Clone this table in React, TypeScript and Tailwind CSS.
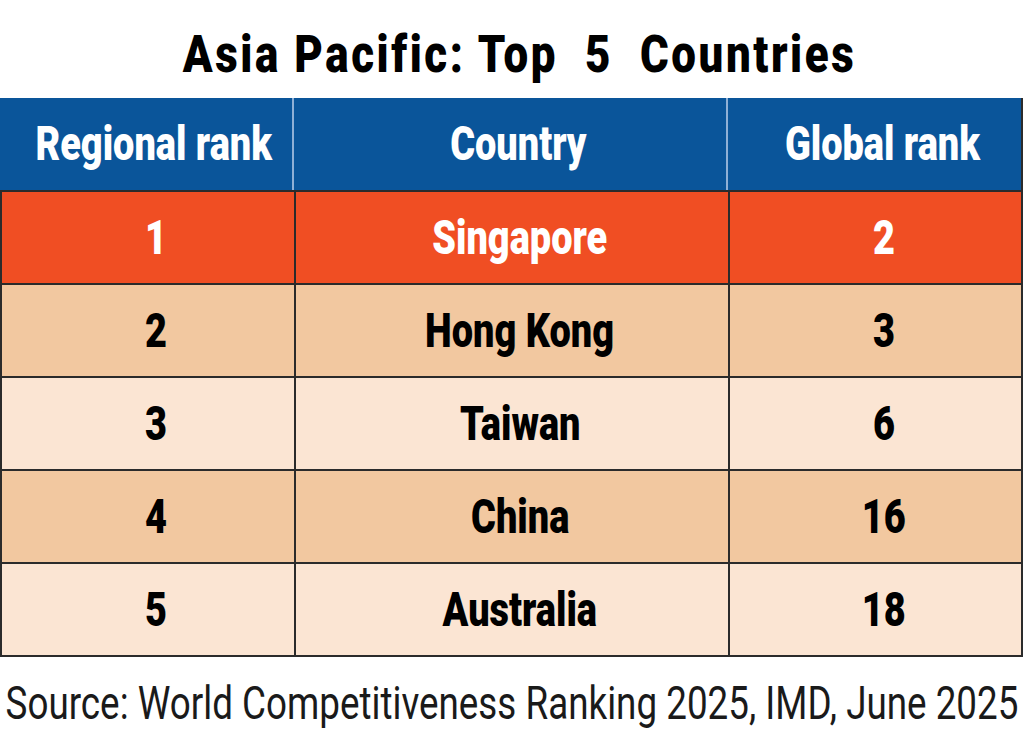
const rows = [
  { rank: "1", country: "Singapore", global: "2", tone: "top" },
  { rank: "2", country: "Hong Kong", global: "3", tone: "dark" },
  { rank: "3", country: "Taiwan", global: "6", tone: "light" },
  { rank: "4", country: "China", global: "16", tone: "dark" },
  { rank: "5", country: "Australia", global: "18", tone: "light" },
]

const toneClass: Record<string, string> = {
  top: "bg-[#f04e23] text-white",
  dark: "bg-[#f2c8a0] text-black",
  light: "bg-[#fbe5d3] text-black",
}

function Cond({ children, className = "" }: { children: React.ReactNode; className?: string }) {
  return <span className={`inline-block origin-center whitespace-nowrap ${className}`}>{children}</span>
}

function Cell({ children, divider }: { children: React.ReactNode; divider?: string }) {
  return (
    <div className={`flex items-center justify-center pl-[16px] ${divider ?? ""}`}>
      <Cond className="scale-x-[0.79] text-[48px] font-black">{children}</Cond>
    </div>
  )
}

export default function App() {
  return (
    <div className="h-[736px] w-[1024px] overflow-hidden bg-white font-['Roboto',sans-serif]">
      <div className="flex h-[98px] items-center justify-center pl-[16px] pt-[12px]">
        <Cond className="scale-x-[0.86] text-[51px] font-black tracking-[3px] text-black">
          Asia Pacific: Top&nbsp; 5&nbsp; Countries
        </Cond>
      </div>
      <div className="w-[1023px] border-b-2 border-r-2 border-[#2b2b2b]">
        <div className="grid h-[92px] grid-cols-[294px_434px_1fr] bg-[#0a559a] text-white">
          <Cell divider="border-r-2 border-[#8fb0d6]">Regional rank</Cell>
          <Cell divider="border-r-2 border-[#8fb0d6]">Country</Cell>
          <Cell>Global rank</Cell>
        </div>
        {rows.map((r) => (
          <div
            key={r.rank}
            className={`grid h-[93px] grid-cols-[294px_434px_1fr] border-l-2 border-t-2 border-[#2b2b2b] ${toneClass[r.tone]}`}
          >
            <Cell divider="border-r-2 border-[#2b2b2b]">{r.rank}</Cell>
            <Cell divider="border-r-2 border-[#2b2b2b]">{r.country}</Cell>
            <Cell>{r.global}</Cell>
          </div>
        ))}
      </div>
      <div className="flex h-[80px] items-center justify-center pt-[12px]">
        <Cond className="scale-x-[0.8] text-[46px] font-normal text-[#1a1a1a]">
          Source: World Competitiveness Ranking 2025, IMD, June 2025
        </Cond>
      </div>
    </div>
  )
}
